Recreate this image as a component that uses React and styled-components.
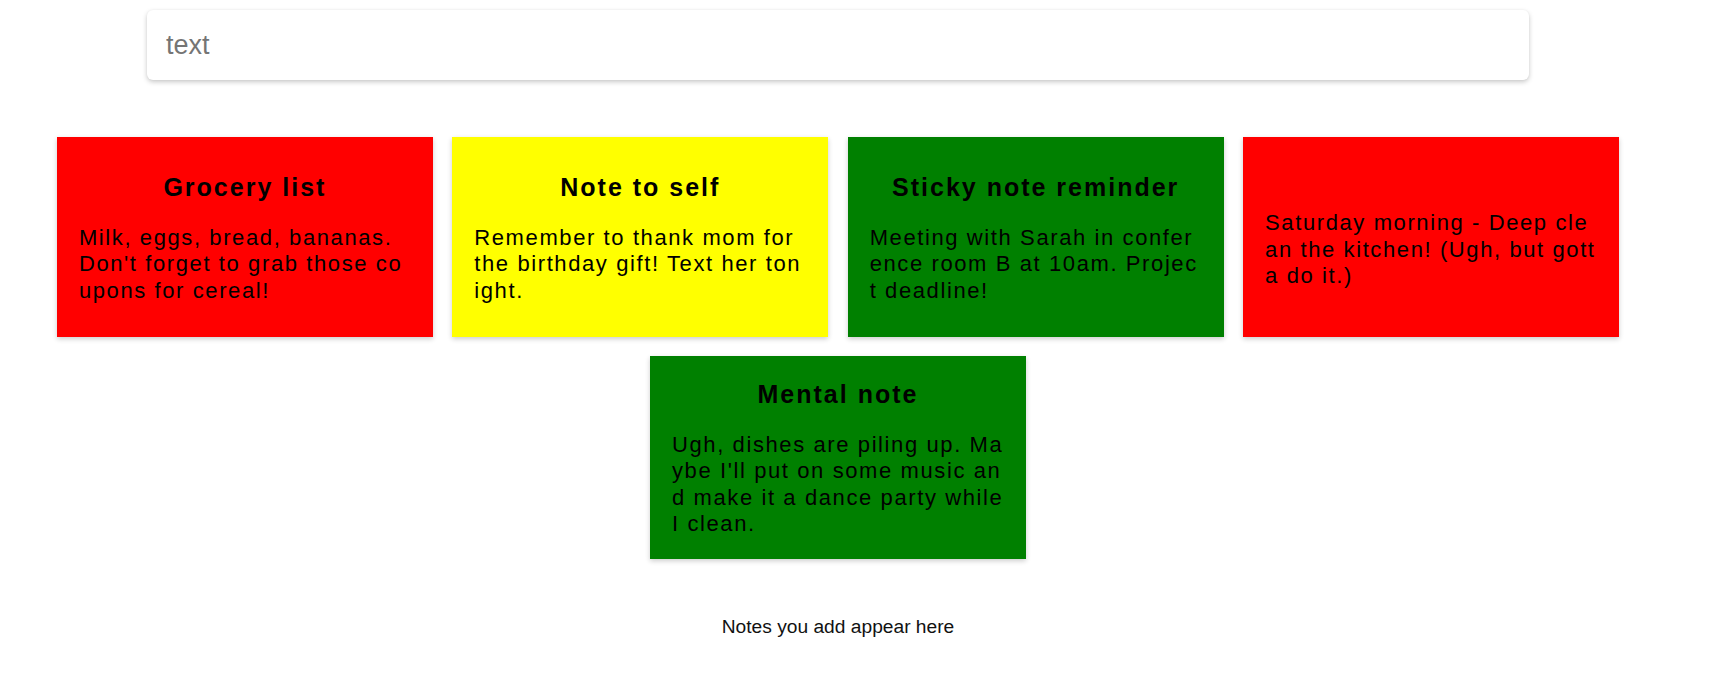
import React from "react";
import styled, { createGlobalStyle } from "styled-components";

const Global = createGlobalStyle`
  html, body { margin: 0; padding: 0; background: #fff; }
  body { font-family: "Liberation Sans", Arial, sans-serif; }
`;

const Page = styled.div`
  width: 1676px;
  display: flex;
  flex-direction: column;
  align-items: center;
`;

const SearchBox = styled.input`
  box-sizing: border-box;
  margin-top: 10px;
  width: 1382px;
  height: 70px;
  border: none;
  outline: none;
  border-radius: 6px;
  background: #fff;
  box-shadow: 0 2px 5px rgba(0, 0, 0, 0.22), 0 0 2px rgba(0, 0, 0, 0.04);
  padding: 0 19px;
  font-family: "Liberation Sans", Arial, sans-serif;
  font-size: 27px;
  color: #222;
  &::placeholder { color: #757575; }
`;

const Board = styled.div`
  margin-top: 57px;
  display: flex;
  flex-wrap: wrap;
  justify-content: center;
  gap: 19px 19.4px;
  width: 1600px;
`;

const Card = styled.div`
  box-sizing: border-box;
  width: 376px;
  min-height: 200px;
  padding: 8px 22px;
  background: ${(p) => p.$color};
  box-shadow: 0 2px 5px rgba(0, 0, 0, 0.2);
  display: flex;
  flex-direction: column;
  justify-content: center;
  color: #000;
`;

const Title = styled.h2`
  margin: 16px 0 0;
  font-size: 25px;
  font-weight: 700;
  letter-spacing: 2px;
  text-align: center;
  line-height: normal;
`;

const Body = styled.p`
  margin: 23px 0 13px;
  font-size: 22px;
  line-height: 1.2;
  letter-spacing: 1.6px;
  word-break: break-all;
`;

const Footer = styled.p`
  margin: 57px 0 0;
  font-size: 19.2px;
  color: #111;
`;

const notes = [
  { title: "Grocery list", body: "Milk, eggs, bread, bananas. Don't forget to grab those coupons for cereal!", color: "#ff0000" },
  { title: "Note to self", body: "Remember to thank mom for the birthday gift! Text her tonight.", color: "#ffff00" },
  { title: "Sticky note reminder", body: "Meeting with Sarah in conference room B at 10am. Project deadline!", color: "#008000" },
  { title: "", body: "Saturday morning - Deep clean the kitchen! (Ugh, but gotta do it.)", color: "#ff0000" },
  { title: "Mental note", body: "Ugh, dishes are piling up. Maybe I'll put on some music and make it a dance party while I clean.", color: "#008000" },
];

export default function App() {
  return (
    <>
      <Global />
      <Page>
        <SearchBox placeholder="text" />
        <Board>
          {notes.map((n, i) => (
            <Card key={i} $color={n.color}>
              <Title>{n.title}</Title>
              <Body>{n.body}</Body>
            </Card>
          ))}
        </Board>
        <Footer>Notes you add appear here</Footer>
      </Page>
    </>
  );
}
